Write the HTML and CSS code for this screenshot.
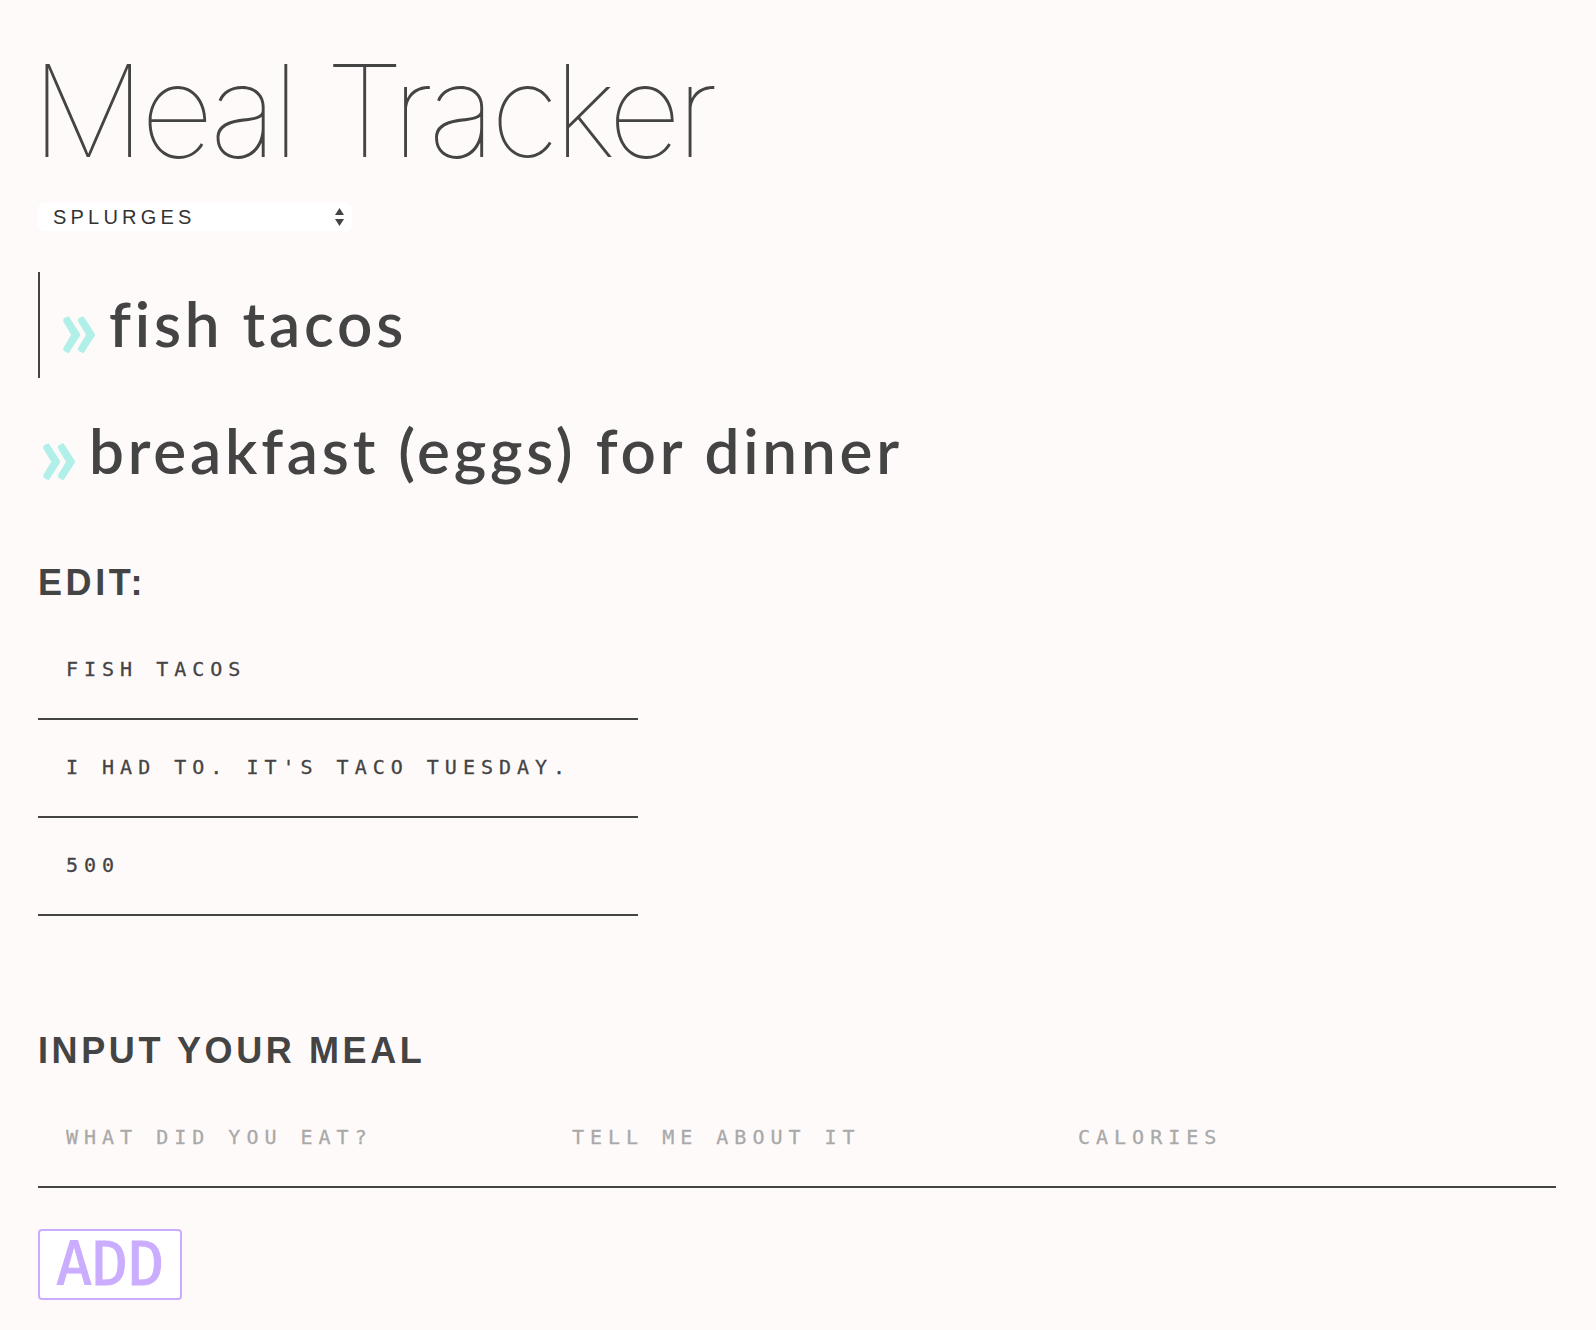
FILE: index.html
```html
<!DOCTYPE html>
<html lang="en">
<head>
<meta charset="utf-8">
<title>Meal Tracker</title>
<link rel="stylesheet" href="styles.css">
</head>
<body>
<main class="page">
  <h1 class="title">Meal Tracker</h1>

  <div class="select-wrap">
    <select class="filter">
      <option>Splurges</option>
      <option>All meals</option>
      <option>Healthy</option>
    </select>
    <svg class="select-arrows" width="9" height="18" viewBox="0 0 9 18" aria-hidden="true">
      <path d="M4.5 0 L9 7 L0 7 Z" fill="#444"/>
      <path d="M0 11 L9 11 L4.5 18 Z" fill="#444"/>
    </svg>
  </div>

  <ul class="meals">
    <li class="meal active">fish tacos</li>
    <li class="meal">breakfast (eggs) for dinner</li>
  </ul>

  <h2 class="heading edit-heading">EDIT:</h2>
  <div class="edit-fields">
    <input class="field" type="text" value="fish tacos">
    <input class="field" type="text" value="I had to. It's taco Tuesday.">
    <input class="field" type="text" value="500">
  </div>

  <h2 class="heading add-heading">INPUT YOUR MEAL</h2>
  <div class="add-fields">
    <input class="field" type="text" placeholder="What did you eat?">
    <input class="field" type="text" placeholder="Tell me about it">
    <input class="field" type="text" placeholder="Calories">
  </div>
  <div class="actions">
    <button class="add-btn" type="button">ADD</button>
  </div>
</main>
</body>
</html>
```

FILE: styles.css
```css
html, body {
  margin: 0;
  padding: 0;
}

body {
  background: #fffafa;
  color: #444;
  font-family: "Liberation Sans", Arial, sans-serif;
}

.page {
  padding: 0 40px 40px 38px;
}

.title {
  margin: 47px 0 0 -7px;
  font-family: "Inter", "Roboto", sans-serif;
  font-weight: 100;
  font-size: 128px;
  line-height: 128px;
  letter-spacing: -0.04em;
  color: #444;
}

.select-wrap {
  position: relative;
  width: 314px;
  height: 28px;
  margin-top: 28px;
}

.filter {
  -webkit-appearance: none;
  appearance: none;
  display: block;
  width: 100%;
  height: 28px;
  margin: 0;
  padding: 0 0 0 15px;
  border: 0;
  border-radius: 6px;
  background: #fff;
  color: #333;
  font-family: "Liberation Sans", Arial, sans-serif;
  font-size: 20px;
  letter-spacing: 4.2px;
  text-transform: uppercase;
  outline: none;
}

.select-arrows {
  position: absolute;
  right: 8px;
  top: 5px;
  pointer-events: none;
}

.meals {
  list-style: none;
  margin: 41px 0 0;
  padding: 0;
}

.meal {
  font-family: "Lato", "Noto Sans", sans-serif;
  font-weight: 600;
  font-size: 62px;
  line-height: 102px;
  padding-bottom: 4px;
  letter-spacing: 3.8px;
  color: #444;
}

.meal + .meal {
  margin-top: 21px;
}

.meal::before {
  content: "»";
  display: inline-block;
  color: #b0f0e8;
  font-weight: 700;
  font-size: 1.45em;
  line-height: 0;
  letter-spacing: 0;
  vertical-align: -0.13em;
  margin-right: 10px;
}

.meal.active {
  border-left: 2px solid #444;
  padding-left: 18px;
}

.heading {
  margin: 0;
  font-family: "Liberation Sans", Arial, sans-serif;
  font-weight: 700;
  font-size: 36px;
  line-height: 36px;
  letter-spacing: 0.1em;
  color: #444;
}

.edit-heading {
  margin-top: 60px;
}

.edit-fields {
  display: flex;
  flex-direction: column;
  width: 600px;
  margin-top: 21px;
}

.field {
  box-sizing: border-box;
  height: 98px;
  min-width: 0;
  margin: 0;
  padding: 0 28px 2px;
  border: 0;
  border-bottom: 2px solid #444;
  border-radius: 0;
  background: transparent;
  color: #444;
  font-family: "DejaVu Sans Mono", monospace;
  font-size: 20px;
  letter-spacing: 6px;
  text-transform: uppercase;
  -webkit-text-stroke: 0.3px currentColor;
  outline: none;
}

.field::placeholder {
  color: #a9a9a9;
  opacity: 1;
}

.add-heading {
  margin-top: 117px;
}

.add-fields {
  display: flex;
  margin-top: 21px;
}

.add-fields .field {
  flex: 1 1 0;
}

.actions {
  margin-top: 41px;
}

.add-btn {
  margin: 0;
  padding: 0 16px;
  border: 2px solid #cbadff;
  border-radius: 4px;
  background: #fff;
  color: #cbadff;
  font-family: "DejaVu Sans Mono", monospace;
  font-size: 60px;
  line-height: 67px;
  -webkit-text-stroke: 1px currentColor;
  cursor: pointer;
}
```
